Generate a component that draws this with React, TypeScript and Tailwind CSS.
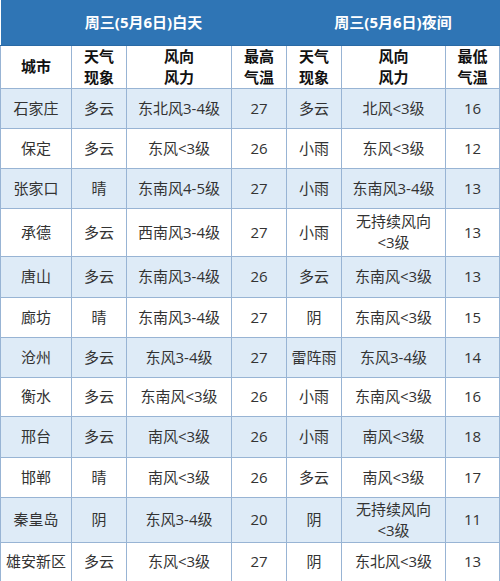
import React from "react";

type Row = {
  city: string;
  dw: string;
  dwind: string;
  hi: string;
  nw: string;
  nwind: string;
  lo: string;
  h: string;
};

const rows: Row[] = [
  { city: "石家庄", dw: "多云", dwind: "东北风3-4级", hi: "27", nw: "多云", nwind: "北风<3级", lo: "16", h: "h-[40px]" },
  { city: "保定", dw: "多云", dwind: "东风<3级", hi: "26", nw: "小雨", nwind: "东风<3级", lo: "12", h: "h-[40px]" },
  { city: "张家口", dw: "晴", dwind: "东南风4-5级", hi: "27", nw: "小雨", nwind: "东南风3-4级", lo: "13", h: "h-[40px]" },
  { city: "承德", dw: "多云", dwind: "西南风3-4级", hi: "27", nw: "小雨", nwind: "无持续风向\n<3级", lo: "13", h: "h-[48px]" },
  { city: "唐山", dw: "多云", dwind: "东南风3-4级", hi: "26", nw: "多云", nwind: "东南风<3级", lo: "13", h: "h-[41px]" },
  { city: "廊坊", dw: "晴", dwind: "东南风3-4级", hi: "27", nw: "阴", nwind: "东南风<3级", lo: "15", h: "h-[40px]" },
  { city: "沧州", dw: "多云", dwind: "东风3-4级", hi: "27", nw: "雷阵雨", nwind: "东风3-4级", lo: "14", h: "h-[40px]" },
  { city: "衡水", dw: "多云", dwind: "东南风<3级", hi: "26", nw: "小雨", nwind: "东南风<3级", lo: "16", h: "h-[39px]" },
  { city: "邢台", dw: "多云", dwind: "南风<3级", hi: "26", nw: "小雨", nwind: "南风<3级", lo: "18", h: "h-[41px]" },
  { city: "邯郸", dw: "晴", dwind: "南风<3级", hi: "26", nw: "多云", nwind: "南风<3级", lo: "17", h: "h-[40px]" },
  { city: "秦皇岛", dw: "阴", dwind: "东风3-4级", hi: "20", nw: "阴", nwind: "无持续风向\n<3级", lo: "11", h: "h-[45px]" },
  { city: "雄安新区", dw: "多云", dwind: "东风<3级", hi: "27", nw: "阴", nwind: "东北风<3级", lo: "13", h: "h-[39px]" },
];

const font = {
  fontFamily: '"Open Sans", "Noto Sans CJK SC", sans-serif',
};

function Cell({ children }: { children: React.ReactNode }) {
  return (
    <td className="border border-[#98b4d4] p-0 text-center align-middle leading-[21px] whitespace-pre-line">
      {children}
    </td>
  );
}

function HCell({ children }: { children: React.ReactNode }) {
  return (
    <th className="border border-[#98b4d4] p-0 text-center align-middle font-bold leading-[21px] text-[#111111] whitespace-pre-line">
      {children}
    </th>
  );
}

export default function App() {
  return (
    <div className="w-[500px] h-[581px] bg-white overflow-hidden" style={font}>
      <table className="w-[499px] border-collapse table-fixed text-[15px] text-[#333333]">
        <colgroup>
          <col className="w-[71px]" />
          <col className="w-[55px]" />
          <col className="w-[105px]" />
          <col className="w-[55px]" />
          <col className="w-[55px]" />
          <col className="w-[104px]" />
          <col className="w-[54px]" />
        </colgroup>
        <thead>
          <tr className="h-[45px] bg-[#2f75b5] text-white">
            <th colSpan={4} className="p-0 text-center font-bold text-[15px] border-b border-[#2a6aa5]">
              周三(5月6日)白天
            </th>
            <th colSpan={3} className="p-0 text-center font-bold text-[15px] border-b border-[#2a6aa5]">
              周三(5月6日)夜间
            </th>
          </tr>
          <tr className="h-[42px] bg-white">
            <HCell>城市</HCell>
            <HCell>{"天气\n现象"}</HCell>
            <HCell>{"风向\n风力"}</HCell>
            <HCell>{"最高\n气温"}</HCell>
            <HCell>{"天气\n现象"}</HCell>
            <HCell>{"风向\n风力"}</HCell>
            <HCell>{"最低\n气温"}</HCell>
          </tr>
        </thead>
        <tbody>
          {rows.map((r, i) => (
            <tr key={r.city} className={`${r.h} ${i % 2 === 0 ? "bg-[#deebf7]" : "bg-white"}`}>
              <Cell>{r.city}</Cell>
              <Cell>{r.dw}</Cell>
              <Cell>{r.dwind}</Cell>
              <Cell>{r.hi}</Cell>
              <Cell>{r.nw}</Cell>
              <Cell>{r.nwind}</Cell>
              <Cell>{r.lo}</Cell>
            </tr>
          ))}
        </tbody>
      </table>
    </div>
  );
}
